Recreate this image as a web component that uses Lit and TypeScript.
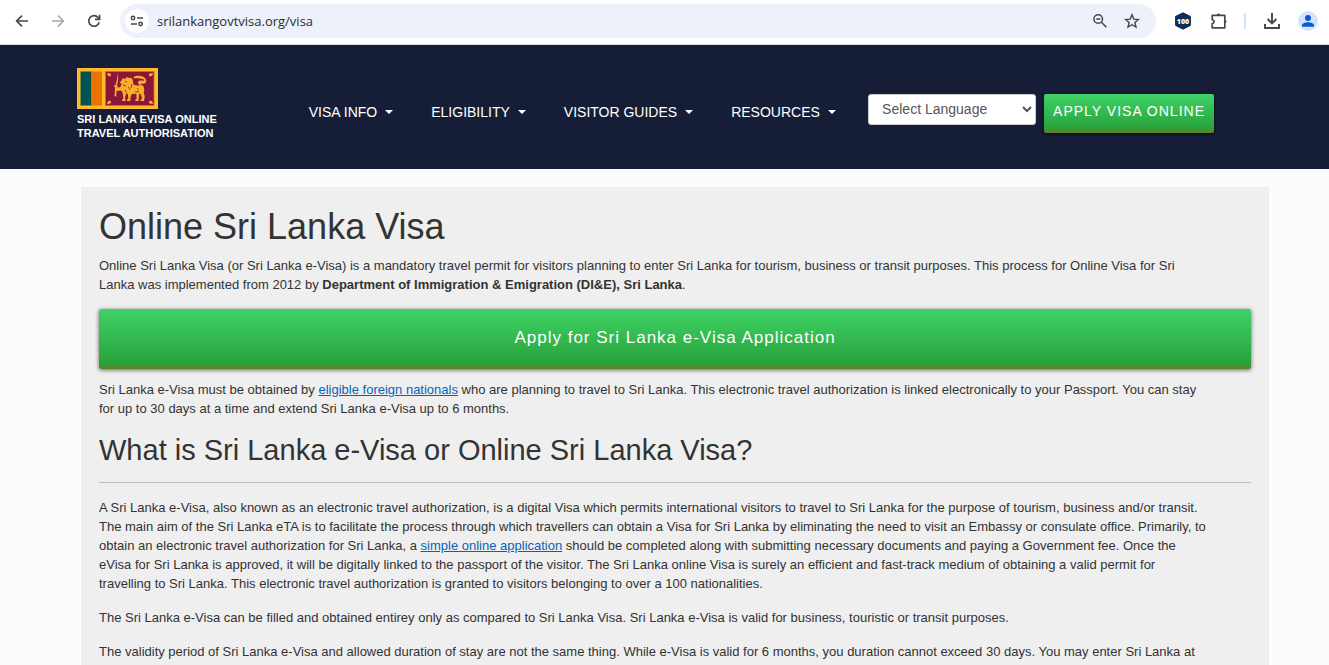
import { LitElement, html, css, svg } from "lit";
import { customElement } from "lit/decorators.js";

@customElement("browser-bar")
class BrowserBar extends LitElement {
  static styles = css`
    :host {
      display: flex;
      align-items: center;
      box-sizing: border-box;
      height: 45px;
      padding: 0 8px 3px 9px;
      background: #fff;
      border-bottom: 1px solid #dfe1e5;
    }
    .icon {
      display: grid;
      place-items: center;
      flex: none;
      width: 26px;
      height: 26px;
      margin: 0;
      padding: 0;
      border: 0;
      border-radius: 50%;
      background: none;
      color: #474747;
    }
    .back-forward {
      display: flex;
      gap: 10px;
      margin-right: 13px;
    }
    .dim {
      color: #a9a9a9;
    }
    .address {
      display: flex;
      align-items: center;
      flex: 1;
      height: 34px;
      padding: 0 11px 0 5px;
      border-radius: 17px;
      background: #edf1fa;
    }
    .site {
      width: 24px;
      height: 24px;
      background: #fff;
      margin-right: 6px;
    }
    .url {
      flex: 1;
      min-width: 0;
      padding: 0 2px;
      border: 0;
      outline: 0;
      background: none;
      color: #2b2c30;
      font: 13px "Open Sans", "Noto Sans", sans-serif;
    }
    .address-tools {
      display: flex;
      gap: 6px;
    }
    .tools {
      display: flex;
      align-items: center;
      gap: 10px;
      margin-left: 14px;
    }
    .bar {
      width: 2px;
      height: 16px;
      margin: 0 3px 0 2px;
      background: #d3e3fd;
    }
    svg {
      display: block;
    }
  `;

  private stroked(d: string, size = 16) {
    return html`<svg width=${size} height=${size} viewBox="0 0 16 16" fill="none" stroke="currentColor" stroke-width="1.6">
      ${svg`<path d=${d}></path>`}
    </svg>`;
  }

  render() {
    return html`
      <div class="back-forward">
        <button class="icon" aria-label="Back">${this.stroked("M14 8H2.8M8 2.6 2.6 8 8 13.4")}</button>
        <button class="icon dim" aria-label="Forward">${this.stroked("M2 8h11.2M8 2.6 13.4 8 8 13.4")}</button>
        <button class="icon" aria-label="Reload">
          <svg width="16" height="16" viewBox="0 0 16 16" fill="none" stroke="currentColor" stroke-width="1.6">
            <path d="M13.2 9.2A5.3 5.3 0 1 1 12 4.4L13.4 5.8"></path>
            <path d="M13.6 1.8v4.6H9" />
          </svg>
        </button>
      </div>
      <div class="address">
        <button class="icon site" aria-label="Site information">
          <svg width="14" height="14" viewBox="0 0 14 14" fill="none" stroke="currentColor" stroke-width="1.5">
            <circle cx="3" cy="4" r="1.7"></circle>
            <circle cx="10.6" cy="10" r="1.7"></circle>
            <path d="M7 4h6M1 10h6"></path>
          </svg>
        </button>
        <input class="url" aria-label="Address" value="srilankangovtvisa.org/visa" />
        <div class="address-tools">
          <button class="icon" aria-label="Zoom">
            <svg width="16" height="16" viewBox="0 0 16 16" fill="none" stroke="currentColor" stroke-width="1.5">
              <circle cx="6.2" cy="6" r="4.3"></circle>
              <path d="M9.4 9.2l5 5M4.2 6h4"></path>
            </svg>
          </button>
          <button class="icon" aria-label="Bookmark">
            <svg width="16" height="16" viewBox="0 0 16 16" fill="none" stroke="currentColor" stroke-width="1.4">
              <path d="M8 1.8l1.8 4.3 4.6.4-3.5 3 1.1 4.6L8 11.7l-4 2.4 1.1-4.6-3.5-3 4.6-.4z"></path>
            </svg>
          </button>
        </div>
      </div>
      <div class="tools">
        <button class="icon" aria-label="Extension">
          <svg width="18" height="18" viewBox="0 0 18 18">
            <path d="M9 .8l7.4 3.6v9L9 17.2l-7.4-3.8v-9z" fill="#0b2e58" stroke="#0b2e58" stroke-linejoin="round"></path>
            <text x="9" y="11.6" text-anchor="middle" fill="#fff" font-family="Open Sans, sans-serif" font-size="7" font-weight="800">100</text>
          </svg>
        </button>
        <button class="icon" aria-label="Extensions">
          <svg width="18" height="18" viewBox="0 0 18 18" fill="none" stroke="currentColor" stroke-width="1.7">
            <path d="M2.2 3.4h12.6v12.400H2.200v-4.200c2.600-.6 2.600-3.400 0-4z" stroke-linejoin="round"></path>
            <path d="M6.600 3.400a1.900 1.900 0 0 1 3.800 0zM14.800 7.800a1.700 1.700 0 0 1 0 3.400z" fill="currentColor" stroke="none"></path>
          </svg>
        </button>
        <span class="bar"></span>
        <button class="icon" aria-label="Downloads">
          <svg width="18" height="18" viewBox="0 0 18 18" fill="none" stroke="currentColor" stroke-width="1.9">
            <path d="M9 1v10M4.6 7 9 11.4 13.4 7M2 12v4h14v-4"></path>
          </svg>
        </button>
        <button class="icon" aria-label="Profile">
          <svg width="20" height="20" viewBox="0 0 20 20">
            <circle cx="10" cy="10" r="10" fill="#d3e3fd"></circle>
            <circle cx="10" cy="7" r="3" fill="#0b57d0"></circle>
            <path d="M4 15.8v-1.2c0-2.4 3.2-3.4 6-3.4s6 1 6 3.4v1.2z" fill="#0b57d0"></path>
          </svg>
        </button>
      </div>
    `;
  }
}

@customElement("site-header")
class SiteHeader extends LitElement {
  static styles = css`
    :host {
      display: flex;
      align-items: flex-start;
      box-sizing: border-box;
      padding: 23px 115px 29px 77px;
      background: #161e37;
      color: #fff;
    }
    .brand {
      color: inherit;
      text-decoration: none;
      font-size: 11px;
      font-weight: 700;
      line-height: 14px;
      white-space: nowrap;
    }
    .flag {
      display: block;
      margin-bottom: 3px;
    }
    .nav {
      display: flex;
      flex: 1;
      gap: 38px;
      margin: 35px 16px 0 92px;
    }
    .menu {
      display: flex;
      align-items: center;
      gap: 8px;
      padding: 0;
      border: 0;
      background: none;
      color: inherit;
      font: 14px/18px "Liberation Sans", Arial, sans-serif;
      white-space: nowrap;
    }
    .caret {
      border: 4px solid transparent;
      border-top-color: #fff;
      border-bottom: 0;
    }
    .language {
      flex: none;
      width: 168px;
      height: 31px;
      margin: 26px 8px 0 0;
      padding: 0 9px 2px;
      border: 1px solid #ccc;
      border-radius: 3px;
      background: #fff;
      color: #555;
      font: 14px "Liberation Sans", Arial, sans-serif;
    }
    .apply {
      flex: none;
      box-sizing: border-box;
      margin-top: 26px;
      padding: 9px 9px 10px;
      border-bottom: 3px solid #55882c;
      border-radius: 2px;
      background: linear-gradient(#3fd366, #28a03a);
      box-shadow: 0 1px 4px rgba(0, 0, 0, 0.6);
      color: #fff;
      font-size: 14px;
      line-height: 17px;
      letter-spacing: 1px;
      text-decoration: none;
      white-space: nowrap;
    }
  `;

  render() {
    const menus = ["VISA INFO", "ELIGIBILITY", "VISITOR GUIDES", "RESOURCES"];
    return html`
      <a class="brand" href="#">
        <svg class="flag" width="81" height="41" viewBox="0 0 81 41" role="img" aria-label="Flag of Sri Lanka">
          <rect width="81" height="41" fill="#ffb929"></rect>
          <rect x="3.5" y="3.5" width="11" height="34" fill="#00534e"></rect>
          <rect x="14.5" y="3.5" width="10.5" height="34" fill="#eb7400"></rect>
          <rect x="28.5" y="3.5" width="48.5" height="34" fill="#8d153a" stroke="#c47b24" stroke-width=".8"></rect>
          <g fill="#f7b02c">
            <path d="M30 5l3.5.6.7 1.3-1.3 1.6-2-.7zM76 5l-3.5.6-.7 1.3 1.3 1.6 2-.7zM30 36l3.5-.6.7-1.3-1.3-1.6-2 .7zM76 36l-3.500-.6-.7-1.300 1.300-1.600 2 .7z"></path>
            <path d="M40.500 4.500c1.200 4 .7 9-.6 13.500l1.300.5-.3 1.200-1.100-.2-.5 9-1.800-.2.6-9.200-1.200-.7.3-1.100 1.100.2c1.600-4.200 2.500-8.500 2.200-13z"></path>
            <path d="M44 13.500l1.500-3.200 2.600.7 1.800-2 2.600 1 2.300.3 1.100 2.200.2 2.700 1.200 1.800 3.500.6 3.500-.4 2.400 1.400.6 3.400-.6 3 1.100 3.200-.8 4.800h-3.200l-.4-1.300 1.500-.7-.3-2.900-1.900-3.200-.8 3.200-.3 4.900h-3.100l-.4-1.300 1.500-.8-.2-5.100-4.600.2-1.300 3.600-.2 3.400h-3.200l-.4-1.300 1.500-.9-.2-4-1.300-1.800-1.500 3.100.2 4.900h-3.100l-.4-1.300 1.500-1-.8-6.300-1.900-1.900-4 .5-1.500-1.500 1-1.300 4.200-1.200 1.400-3.400-1.600-.4-.6-1.500z"></path>
            <path d="M65 19c-1.500-1.600-3.200-2-3.900-3.900-.5-1.700 1-2.600 2.400-2.500l3.800.2-1-1.900-4-.5c-2.600-.4-5.200.7-5.900-1.200 3.400-2.200 8.600-1.500 11.200.5 2 1.600 2.200 4.600.3 5.600-1.700.7-3.200.2-5 .4 1 .9 2.600 1.500 3.400 3z"></path>
          </g>
          <path d="M48 13.500l2 .5M51 19l2.500 3M55 16l-1 4M58 24l4-.5M48 22l1.500 2.500M46 17l3 1M60 20l2 2" stroke="#8d153a" stroke-width=".8" fill="none"></path>
        </svg>
        SRI LANKA EVISA ONLINE<br />TRAVEL AUTHORISATION
      </a>
      <nav class="nav">
        ${menus.map((m) => html`<button class="menu" aria-haspopup="true">${m}<span class="caret"></span></button>`)}
      </nav>
      <select class="language" aria-label="Select Language">
        <option>Select Language</option>
      </select>
      <a class="apply" href="#">APPLY VISA ONLINE</a>
    `;
  }
}

@customElement("app-root")
class AppRoot extends LitElement {
  static styles = css`
    :host {
      display: flex;
      flex-direction: column;
      min-height: 100vh;
      background: #fcfcfc;
      color: #333;
      font: 13px/19px "Liberation Sans", Arial, sans-serif;
    }
    .panel {
      flex: 1;
      margin: 18px 60px 0 81px;
      padding: 19px 18px 0;
      background: #efefef;
    }
    h1,
    h2 {
      margin: 0;
      font-weight: 400;
    }
    h1 {
      font-size: 36px;
      line-height: 42px;
      margin-bottom: 8px;
    }
    h2 {
      font-size: 29px;
      line-height: 34px;
      padding-bottom: 15px;
      margin-bottom: 15px;
      border-bottom: 1px solid #bfbfbf;
    }
    p {
      margin: 0 0 15px;
      padding-right: 42px;
    }
    a {
      color: #0a62b8;
    }
    .cta {
      display: block;
      margin-bottom: 11px;
      padding: 18px 16px;
      border-bottom: 3px solid #55882c;
      border-radius: 2px;
      background: linear-gradient(#3fd366, #28a03a);
      box-shadow: 0 1px 4px rgba(0, 0, 0, 0.6);
      color: #fff;
      font-size: 17px;
      line-height: 21px;
      letter-spacing: 1px;
      text-align: center;
      text-decoration: none;
    }
  `;

  render() {
    return html`
      <browser-bar></browser-bar>
      <site-header></site-header>
      <main class="panel">
        <h1>Online Sri Lanka Visa</h1>
        <p>
          Online Sri Lanka Visa (or Sri Lanka e-Visa) is a mandatory travel permit for visitors planning to enter Sri
          Lanka for tourism, business or transit purposes. This process for Online Visa for Sri Lanka was implemented
          from 2012 by <strong>Department of Immigration &amp; Emigration (DI&amp;E), Sri Lanka</strong>.
        </p>
        <a class="cta" href="#">Apply for Sri Lanka e-Visa Application</a>
        <p>
          Sri Lanka e-Visa must be obtained by <a href="#">eligible foreign nationals</a> who are planning to travel to
          Sri Lanka. This electronic travel authorization is linked electronically to your Passport. You can stay for up
          to 30 days at a time and extend Sri Lanka e-Visa up to 6 months.
        </p>
        <h2>What is Sri Lanka e-Visa or Online Sri Lanka Visa?</h2>
        <p>
          A Sri Lanka e-Visa, also known as an electronic travel authorization, is a digital Visa which permits
          international visitors to travel to Sri Lanka for the purpose of tourism, business and/or transit. The main
          aim of the Sri Lanka eTA is to facilitate the process through which travellers can obtain a Visa for Sri Lanka
          by eliminating the need to visit an Embassy or consulate office. Primarily, to obtain an electronic travel
          authorization for Sri Lanka, a <a href="#">simple online application</a> should be completed along with
          submitting necessary documents and paying a Government fee. Once the eVisa for Sri Lanka is approved, it will
          be digitally linked to the passport of the visitor. The Sri Lanka online Visa is surely an efficient and
          fast-track medium of obtaining a valid permit for travelling to Sri Lanka. This electronic travel
          authorization is granted to visitors belonging to over a 100 nationalities.
        </p>
        <p>
          The Sri Lanka e-Visa can be filled and obtained entirey only as compared to Sri Lanka Visa. Sri Lanka e-Visa
          is valid for business, touristic or transit purposes.
        </p>
        <p>
          The validity period of Sri Lanka e-Visa and allowed duration of stay are not the same thing. While e-Visa is
          valid for 6 months, you duration cannot exceed 30 days. You may enter Sri Lanka at
        </p>
      </main>
    `;
  }
}
